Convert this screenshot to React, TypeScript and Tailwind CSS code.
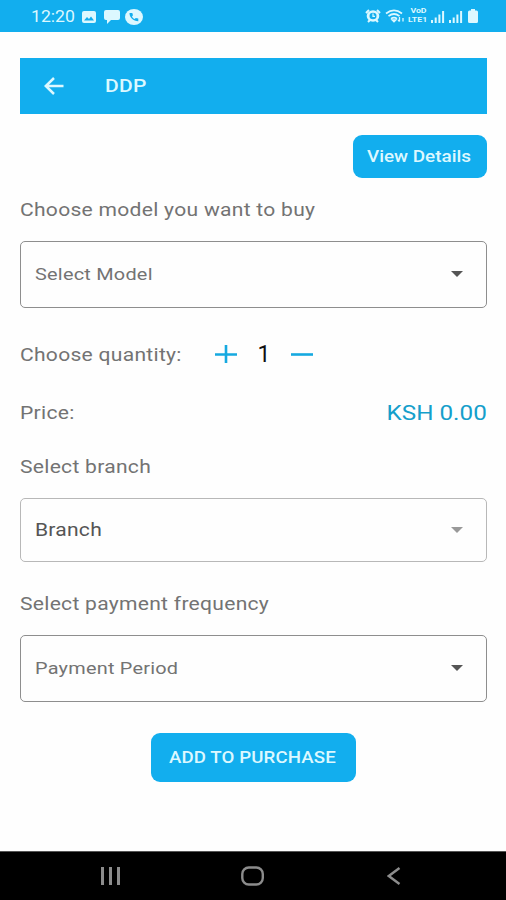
import React from 'react'
import clsx from 'clsx'

interface LabelProps {
  children: React.ReactNode
  className?: string
}

const Label: React.FC<LabelProps> = ({ children, className }) => (
  <span
    className={clsx(
      'inline-block origin-left whitespace-nowrap leading-6',
      className ?? 'scale-x-[1.17] text-[18px] tracking-[0.24px] text-[#737373]'
    )}
  >
    {children}
  </span>
)

interface SelectBoxProps {
  value: string
  className?: string
  textClass?: string
  arrowClass?: string
}

const SelectBox: React.FC<SelectBoxProps> = ({
  value,
  className,
  textClass = 'scale-x-[1.17] text-[17px] tracking-[0.2px] text-[#737373]',
  arrowClass = 'fill-[#555]',
}) => (
  <button
    type="button"
    className={clsx('flex w-full items-center justify-between rounded-[5px] border-[1.5px] pl-[14px] pr-[23px] text-left', className)}
  >
    <Label className={textClass}>{value}</Label>
    <svg viewBox="0 0 12 6" className={clsx('h-[6px] w-[12px]', arrowClass)}>
      <path d="M0 0h12L6 6z" />
    </svg>
  </button>
)

const StatusBar: React.FC = () => (
  <div className="flex h-8 items-center justify-between bg-[#12aeee] pl-[31px] pr-[28px] text-[#dcf8ff]">
    <div className="flex items-center pt-px">
      <span className="w-[51px] text-[16px] leading-5">
        <span className="inline-block origin-left scale-x-[1.1]">12:20</span>
      </span>
      <svg viewBox="0 0 14 12" className="h-3 w-[14px]">
        <rect width="14" height="12" rx="2" fill="currentColor" />
        <path d="M2 9.5l3-3.5 2 2 2-2.500 3 4z" fill="#12aeee" />
      </svg>
      <svg viewBox="0 0 16 14" className="ml-2 h-[14px] w-4" fill="currentColor">
        <path d="M2 0h12a2 2 0 0 1 2 2v6a2 2 0 0 1-2 2H7l-4 4v-4H2a2 2 0 0 1-2-2V2a2 2 0 0 1 2-2z" />
      </svg>
      <svg viewBox="0 0 18 16" className="ml-[5px] h-4 w-[18px]">
        <ellipse cx="9" cy="8" rx="9" ry="8" fill="currentColor" />
        <path d="M4.500 4c0 4.500 3.700 8.200 8.800 8.200V9.600l-2.500-.7-1.200 1C8.200 9.500 7.500 8.700 7 7.500l1-1.200L7.300 4z" fill="#12aeee" />
      </svg>
    </div>
    <div className="flex items-center">
      <svg viewBox="0 0 16 14" className="mr-1 h-[14px] w-4">
        <path d="M1 4l3-3M15 4l-3-3M3 13l2-2M13 13l-2-2" stroke="currentColor" strokeWidth="2" />
        <ellipse cx="8" cy="7" rx="6.300" ry="5.800" fill="currentColor" />
        <ellipse cx="8" cy="7" rx="3.500" ry="3.300" fill="#12aeee" />
        <path d="M8 4.500V7.300h2" fill="none" stroke="currentColor" strokeWidth="1.200" />
      </svg>
      <svg viewBox="0 0 20 14" className="mr-[2px] h-[14px] w-5" fill="none" stroke="currentColor" strokeWidth="1.700">
        <path d="M1 4.500c5-4 11-4 16 0M3.500 7.200c3.500-2.800 7.500-2.800 11 0M6 9.700c2-1.500 4-1.500 6 0" />
        <path d="M7.500 11h3L9 12.500z" fill="currentColor" />
        <path d="M14.500 8v4.500m-1.500-1.500l1.500 1.500M18 12.500V9" strokeWidth="1.300" />
      </svg>
      <span className="mr-px flex w-[22px] flex-col items-center text-[7px] font-bold leading-[9px]">
        <span className="scale-x-[1.25]">VoD</span>
        <span className="scale-x-[1.25]">LTE1</span>
      </span>
      <svg viewBox="0 0 15 13" className="h-[13px] w-[15px]" fill="currentColor">
        <path d="M1 10h2v3H1zM4.700 7.500h2V13h-2zM8.400 4.500h2V13h-2zM12.100 1h2v12h-2z" />
      </svg>
      <svg viewBox="0 0 15 13" className="ml-[3px] h-[13px] w-[15px]" fill="currentColor">
        <path d="M1 10h2v3H1zM4.700 7.500h2V13h-2zM8.400 4.500h2V13h-2zM12.100 1h2v12h-2z" />
      </svg>
      <svg viewBox="0 0 10 14" className="ml-[5px] h-[14px] w-[10px]" fill="currentColor">
        <path d="M3 0h4v1.500h1.500A1.500 1.500 0 0 1 10 3v9.500A1.500 1.500 0 0 1 8.500 14h-7A1.500 1.500 0 0 1 0 12.500V3a1.500 1.500 0 0 1 1.500-1.500H3z" />
      </svg>
    </div>
  </div>
)

const NavBar: React.FC = () => (
  <div className="flex h-[49px] items-center border-t border-[#555] bg-black pl-[100px] pr-[105px] text-[#8c8c8c]">
    <svg viewBox="0 0 21 18" className="h-[18px] w-[21px]" stroke="currentColor" strokeWidth="3">
      <path d="M2.500 0v18M10.500 0v18M18.500 0v18" />
    </svg>
    <svg viewBox="0 0 24 20" className="ml-[120px] h-5 w-6" fill="none" stroke="currentColor" strokeWidth="2.400">
      <rect x="1.300" y="1.500" width="20.500" height="17" rx="6.500" />
    </svg>
    <svg viewBox="0 0 14 18" className="ml-auto h-[18px] w-[14px]" fill="none" stroke="currentColor" strokeWidth="2.400">
      <path d="M12.500 1L1.800 9l10.700 8" />
    </svg>
  </div>
)

const App: React.FC = () => {
  const [quantity, setQuantity] = React.useState(1)

  return (
    <div className="flex h-[900px] w-[506px] flex-col bg-[#fefefe] font-['Roboto',sans-serif]">
      <StatusBar />

      <main className="flex flex-1 flex-col pl-5 pr-[19px] pt-[26px]">
        {/* Header */}
        <header className="flex h-14 items-center bg-[#12aeee] pl-6">
          <svg viewBox="0 0 20 18" className="h-[18px] w-5" fill="none" stroke="#dcf8ff" strokeWidth="2.500">
            <path d="M19.500 9H2M10 1L1.800 9l8.200 8" />
          </svg>
          <Label className="ml-[41px] scale-x-[1.17] text-[18px] font-medium tracking-[0.2px] text-[#dcf8ff]">DDP</Label>
        </header>

        <button type="button" className="mt-[21px] h-[43px] w-[134px] self-end rounded-[9px] bg-[#12aeee] pl-[14px] text-left">
          <Label className="scale-x-[1.11] text-[17px] font-medium text-[#dcf8ff]">View Details</Label>
        </button>

        <div className="mt-5 h-6">
          <Label>Choose model you want to buy</Label>
        </div>
        <SelectBox value="Select Model" className="mt-[19px] h-[67px] border-[#8e8e8e] pb-[2px]" />

        {/* Quantity */}
        <div className="mt-[34px] flex h-6 items-center">
          <div className="w-[195px] pt-[2px]">
            <Label>Choose quantity:</Label>
          </div>
          <button type="button" onClick={() => setQuantity(quantity + 1)}>
            <svg viewBox="0 0 22 18" className="h-[18px] w-[22px]" stroke="#16a9e0" strokeWidth="2.600">
              <path d="M0 9.500h22M11 0v18" />
            </svg>
          </button>
          <span className="w-[54px] pt-px text-center text-[23px] leading-6 text-[#111]">{quantity}</span>
          <button type="button" onClick={() => setQuantity(Math.max(1, quantity - 1))}>
            <svg viewBox="0 0 22 18" className="h-[18px] w-[22px]" stroke="#16a9e0" strokeWidth="2.600">
              <path d="M0 9.500h22" />
            </svg>
          </button>
        </div>

        <div className="mt-[35px] flex h-6 items-center justify-between">
          <Label>Price:</Label>
          <span className="inline-block origin-right scale-x-[1.155] text-[21px] leading-6 text-[#159fcb]">KSH 0.00</span>
        </div>

        <div className="mt-[30px] h-6">
          <Label>Select branch</Label>
        </div>
        <SelectBox
          value="Branch"
          className="mt-[19px] h-[64px] border-[#b8b8b8]"
          textClass="scale-x-[1.17] text-[18px] tracking-[0.2px] text-[#555]"
          arrowClass="fill-[#999]"
        />

        <div className="mt-[30px] h-6">
          <Label>Select payment frequency</Label>
        </div>
        <SelectBox value="Payment Period" className="mt-[19px] h-[67px] border-[#8e8e8e] pb-[2px]" />

        <button type="button" className="mt-[31px] h-[49px] w-[205px] self-center rounded-[9px] bg-[#12aeee] pl-[18px] pt-px text-left">
          <Label className="scale-x-[1.165] text-[16px] font-medium tracking-[0.1px] text-[#dcf8ff]">ADD TO PURCHASE</Label>
        </button>
      </main>

      <NavBar />
    </div>
  )
}

export default App
